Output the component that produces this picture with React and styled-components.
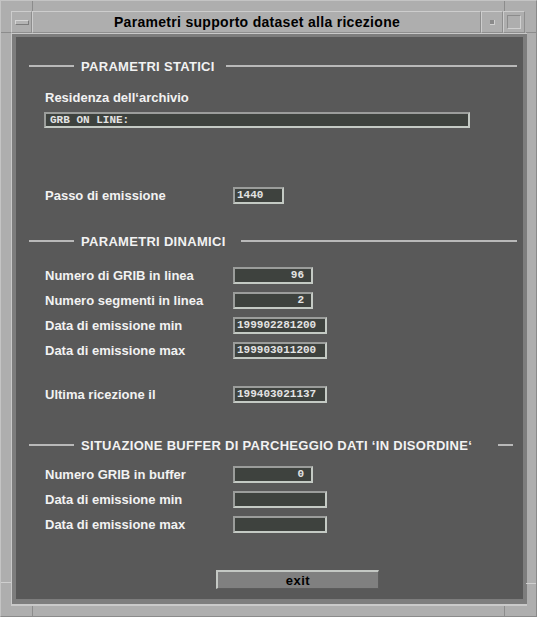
import React from "react";
import styled, { createGlobalStyle } from "styled-components";

const Global = createGlobalStyle`
  html, body { margin: 0; padding: 0; background: #aeaeae; }
  body { font-family: "Liberation Sans", Arial, sans-serif; }
`;

const Window = styled.div`
  position: relative;
  width: 537px;
  height: 617px;
  box-sizing: border-box;
  background: #aeaeae;
  display: flex;
  flex-direction: column;
  border-top: 1px solid #c4c4c4;
  border-left: 1px solid #c4c4c4;
  border-right: 1px solid #8a8a8a;
  border-bottom: 1px solid #8a8a8a;
  padding: 10px 9px 10px 10px;
`;

const Notch = styled.div`
  position: absolute;
  background: ${(p) => (p.$light ? "#cfcfcf" : "#8c8c8c")};
  ${(p) => p.$pos}
`;

const TitleBar = styled.div`
  display: flex;
  height: 22px;
  margin-right: 2px;
`;

const TitleCell = styled.div`
  box-sizing: border-box;
  height: 22px;
  width: ${(p) => (p.$w ? `${p.$w}px` : "auto")};
  flex: ${(p) => (p.$w ? "none" : "1")};
  border-top: 1px solid #cdcdcd;
  border-left: 1px solid #cdcdcd;
  border-right: 1px solid #8e8e8e;
  border-bottom: 1px solid #8e8e8e;
  display: flex;
  align-items: center;
  justify-content: center;
`;

const TitleText = styled.span`
  font-family: "Liberation Sans", Arial, sans-serif;
  font-weight: bold;
  font-size: 14px;
  letter-spacing: 0.3px;
  color: #000;
  margin-left: 1px;
`;

const MenuGlyph = styled.div`
  width: 14px;
  height: 5px;
  box-sizing: border-box;
  background: #b4b4b4;
  border-top: 1px solid #d6d6d6;
  border-left: 1px solid #d6d6d6;
  border-bottom: 1px solid #7c7c7c;
  border-right: 1px solid #7c7c7c;
`;

const MinGlyph = styled.div`
  width: 4px;
  height: 4px;
  background: #8a8a8a;
  border-right: 1px solid #d0d0d0;
  border-bottom: 1px solid #d0d0d0;
`;

const MaxGlyph = styled.div`
  width: 14px;
  height: 14px;
  box-sizing: border-box;
  border-top: 1px solid #8c8c8c;
  border-left: 1px solid #8c8c8c;
  border-right: 1px solid #d0d0d0;
  border-bottom: 1px solid #d0d0d0;
`;

const Panel = styled.div`
  flex: 1;
  display: flex;
  box-sizing: border-box;
  border-style: solid;
  border-color: #c9c9c9;
  border-width: 1px 2px 2px 1px;
`;

const Workspace = styled.div`
  flex: 1;
  box-sizing: border-box;
  background: #595959;
  border-style: solid;
  border-color: #7d7d7d;
  border-width: 3px 4px 5px 4px;
  padding-top: 22px;
  display: flex;
  flex-direction: column;
  font-family: "Liberation Sans", Arial, sans-serif;
  color: #f2f2f2;
`;

const Heading = styled.div`
  display: flex;
  align-items: center;
  height: 14px;
  margin-top: ${(p) => p.$mt || 0}px;
  padding-left: 13px;
  padding-right: ${(p) => p.$pr || 6}px;
`;

const Rule = styled.div`
  height: 2px;
  background: #b9b9b9;
  width: ${(p) => (p.$w ? `${p.$w}px` : "auto")};
  flex: ${(p) => (p.$w ? "none" : "1")};
`;

const HeadingText = styled.span`
  font-weight: bold;
  font-size: 13px;
  letter-spacing: 0.3px;
  margin: 0 ${(p) => p.$gap || 11}px 0 7px;
  white-space: nowrap;
`;

const Label = styled.div`
  font-weight: bold;
  font-size: 13px;
  line-height: 15px;
  white-space: nowrap;
`;

const StackLabel = styled(Label)`
  margin: 17px 0 0 29px;
`;

const Row = styled.div`
  display: grid;
  grid-template-columns: 188px auto;
  align-items: center;
  padding-left: 29px;
  margin-top: ${(p) => p.$mt || 0}px;
`;

const Field = styled.div`
  box-sizing: border-box;
  width: ${(p) => p.$w}px;
  height: 17px;
  background: #3e423e;
  border-style: solid;
  border-width: 2px;
  border-color: #9b9d9b #c4cac4 #c4cac4 #9b9d9b;
  font-family: "Liberation Mono", "Courier New", monospace;
  font-weight: bold;
  font-size: 11px;
  line-height: 13px;
  color: #e4e4e4;
  text-align: ${(p) => (p.$right ? "right" : "left")};
  padding: 0 ${(p) => (p.$right ? 7 : 2)}px 0 ${(p) => (p.$pl ?? 2)}px;
  white-space: pre;
  overflow: hidden;
`;

const ArchiveField = styled(Field)`
  margin: 7px 0 0 28px;
  height: 16px;
  line-height: 12px;
`;

const ExitButton = styled.button`
  align-self: flex-start;
  margin: 37px 0 0 200px;
  width: 163px;
  height: 19px;
  box-sizing: border-box;
  background: #808080;
  border-style: solid;
  border-width: 2px 1px 1px 2px;
  border-color: #c4c8c4 #5c5c5c #5c5c5c #c4c8c4;
  font-family: "Liberation Sans", Arial, sans-serif;
  font-weight: bold;
  font-size: 13px;
  letter-spacing: 0.5px;
  color: #000;
  padding: 0;
  line-height: 15px;
`;

const FormRow = ({ label, value, w, right, mt }) => (
  <Row $mt={mt}>
    <Label>{label}</Label>
    <Field $w={w} $right={right}>
      {value}
    </Field>
  </Row>
);

export default function App() {
  return (
    <>
      <Global />
      <Window>
        <Notch $pos="left: 31px; top: 0; width: 1px; height: 10px;" />
        <Notch $pos="left: 503px; top: 0; width: 1px; height: 10px;" />
        <Notch $pos="left: 0; top: 31px; width: 10px; height: 1px;" />
        <Notch $pos="right: 0; top: 31px; width: 10px; height: 1px;" />
        <Notch $pos="left: 31px; bottom: 0; width: 1px; height: 10px;" />
        <Notch $pos="left: 503px; bottom: 0; width: 1px; height: 10px;" />
        <Notch $pos="left: 0; bottom: 33px; width: 10px; height: 1px;" $light />
        <Notch $pos="right: 0; bottom: 32px; width: 10px; height: 1px;" $light />
        <TitleBar>
          <TitleCell $w={21}>
            <MenuGlyph />
          </TitleCell>
          <TitleCell>
            <TitleText>Parametri supporto dataset alla ricezione</TitleText>
          </TitleCell>
          <TitleCell $w={22}>
            <MinGlyph />
          </TitleCell>
          <TitleCell $w={22}>
            <MaxGlyph />
          </TitleCell>
        </TitleBar>
        <Panel>
          <Workspace>
            <Heading>
              <Rule $w={45} />
              <HeadingText>PARAMETRI STATICI</HeadingText>
              <Rule />
            </Heading>
            <StackLabel>Residenza dell‘archivio</StackLabel>
            <ArchiveField $w={426} $pl={4}>GRB ON LINE:</ArchiveField>

            <FormRow label="Passo di emissione" value="1440" w={51} mt={59} />

            <Heading $mt={30}>
              <Rule $w={45} />
              <HeadingText $gap={15}>PARAMETRI DINAMICI</HeadingText>
              <Rule />
            </Heading>
            <FormRow label="Numero di GRIB in linea" value="96" w={80} right mt={19} />
            <FormRow label="Numero segmenti in linea" value="2" w={80} right mt={8} />
            <FormRow label="Data di emissione min" value="199902281200" w={94} mt={8} />
            <FormRow label="Data di emissione max" value="199903011200" w={94} mt={8} />
            <FormRow label="Ultima ricezione il" value="199403021137" w={94} mt={27} />

            <Heading $mt={35} $pr={10}>
              <Rule $w={45} />
              <HeadingText $gap={26}>SITUAZIONE BUFFER DI PARCHEGGIO DATI ‘IN DISORDINE‘</HeadingText>
              <Rule $w={15} />
            </Heading>
            <FormRow label="Numero GRIB in buffer" value="0" w={80} right mt={14} />
            <FormRow label="Data di emissione min" value="" w={94} mt={8} />
            <FormRow label="Data di emissione max" value="" w={94} mt={8} />

            <ExitButton>exit</ExitButton>
          </Workspace>
        </Panel>
      </Window>
    </>
  );
}
